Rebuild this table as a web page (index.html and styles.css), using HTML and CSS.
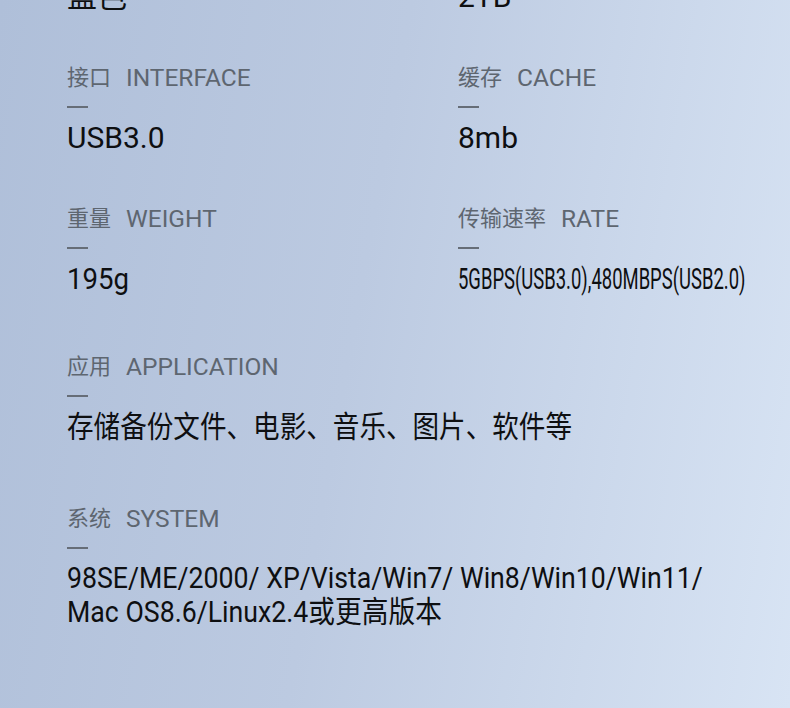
FILE: index.html
```html
<!DOCTYPE html>
<html lang="zh-CN">
<head>
<meta charset="utf-8">
<title>产品参数</title>
<link rel="stylesheet" href="styles.css">
</head>
<body>
<main class="specs">
  <section class="item">
    <div class="label">颜色<span class="en">COLOR</span></div>
    <div class="dash"></div>
    <div class="value">蓝色</div>
  </section>
  <section class="item">
    <div class="label">容量<span class="en">CAPACITY</span></div>
    <div class="dash"></div>
    <div class="value">2TB</div>
  </section>

  <section class="item">
    <div class="label">接口<span class="en">INTERFACE</span></div>
    <div class="dash"></div>
    <div class="value">USB3.0</div>
  </section>
  <section class="item">
    <div class="label">缓存<span class="en">CACHE</span></div>
    <div class="dash"></div>
    <div class="value">8mb</div>
  </section>

  <section class="item">
    <div class="label">重量<span class="en">WEIGHT</span></div>
    <div class="dash"></div>
    <div class="value"><span class="narrow weight">195g</span></div>
  </section>
  <section class="item">
    <div class="label">传输速率<span class="en">RATE</span></div>
    <div class="dash"></div>
    <div class="value"><span class="narrow rate">5GBPS(USB3.0),480MBPS(USB2.0)</span></div>
  </section>

  <section class="item wide app">
    <div class="label">应用<span class="en">APPLICATION</span></div>
    <div class="dash"></div>
    <div class="value"><span class="narrow cn">存储备份文件、电影、音乐、图片、软件等</span></div>
  </section>

  <section class="item wide sys">
    <div class="label">系统<span class="en">SYSTEM</span></div>
    <div class="dash"></div>
    <div class="value multi"><span class="narrow os">98SE/ME/2000/ XP/Vista/Win7/ Win8/Win10/Win11/<br>Mac OS8.6/Linux2.4或更高版本</span></div>
  </section>
</main>
</body>
</html>
```
FILE: styles.css
```css
html, body {
  margin: 0;
  padding: 0;
  overflow: hidden;
}
body {
  width: 790px;
  height: 708px;
  background: linear-gradient(100deg, #afbfd9 0%, #bccae1 45%, #d8e4f4 100%);
  font-family: Roboto, "Noto Sans CJK SC", sans-serif;
}
.specs {
  display: grid;
  grid-template-columns: 391px 1fr;
  row-gap: 47px;
  padding-left: 67px;
  margin-top: -79px;
}
.item {
  display: flex;
  flex-direction: column;
  align-items: flex-start;
}
.wide {
  grid-column: 1 / span 2;
}
.app {
  margin-top: 7px;
}
.sys {
  margin-top: 11px;
}
.label {
  font-size: 22px;
  line-height: 30px;
  height: 30px;
  color: #5e6670;
  white-space: nowrap;
}
.en {
  font-size: 24.5px;
  margin-left: 15px;
  position: relative;
  top: 1px;
}
.dash {
  width: 21px;
  height: 2px;
  background: #666d77;
  margin: 14px 0 12px;
}
.value {
  font-size: 30px;
  line-height: 36px;
  height: 36px;
  color: #0e0f11;
  white-space: nowrap;
}
.multi {
  line-height: 34px;
  height: 68px;
}
.narrow {
  display: inline-block;
  transform-origin: left center;
}
.weight {
  transform: scaleX(0.92);
}
.rate {
  transform: scaleX(0.615);
}
.cn {
  transform: scaleX(0.886);
}
.os {
  transform: scaleX(0.89);
}
```
